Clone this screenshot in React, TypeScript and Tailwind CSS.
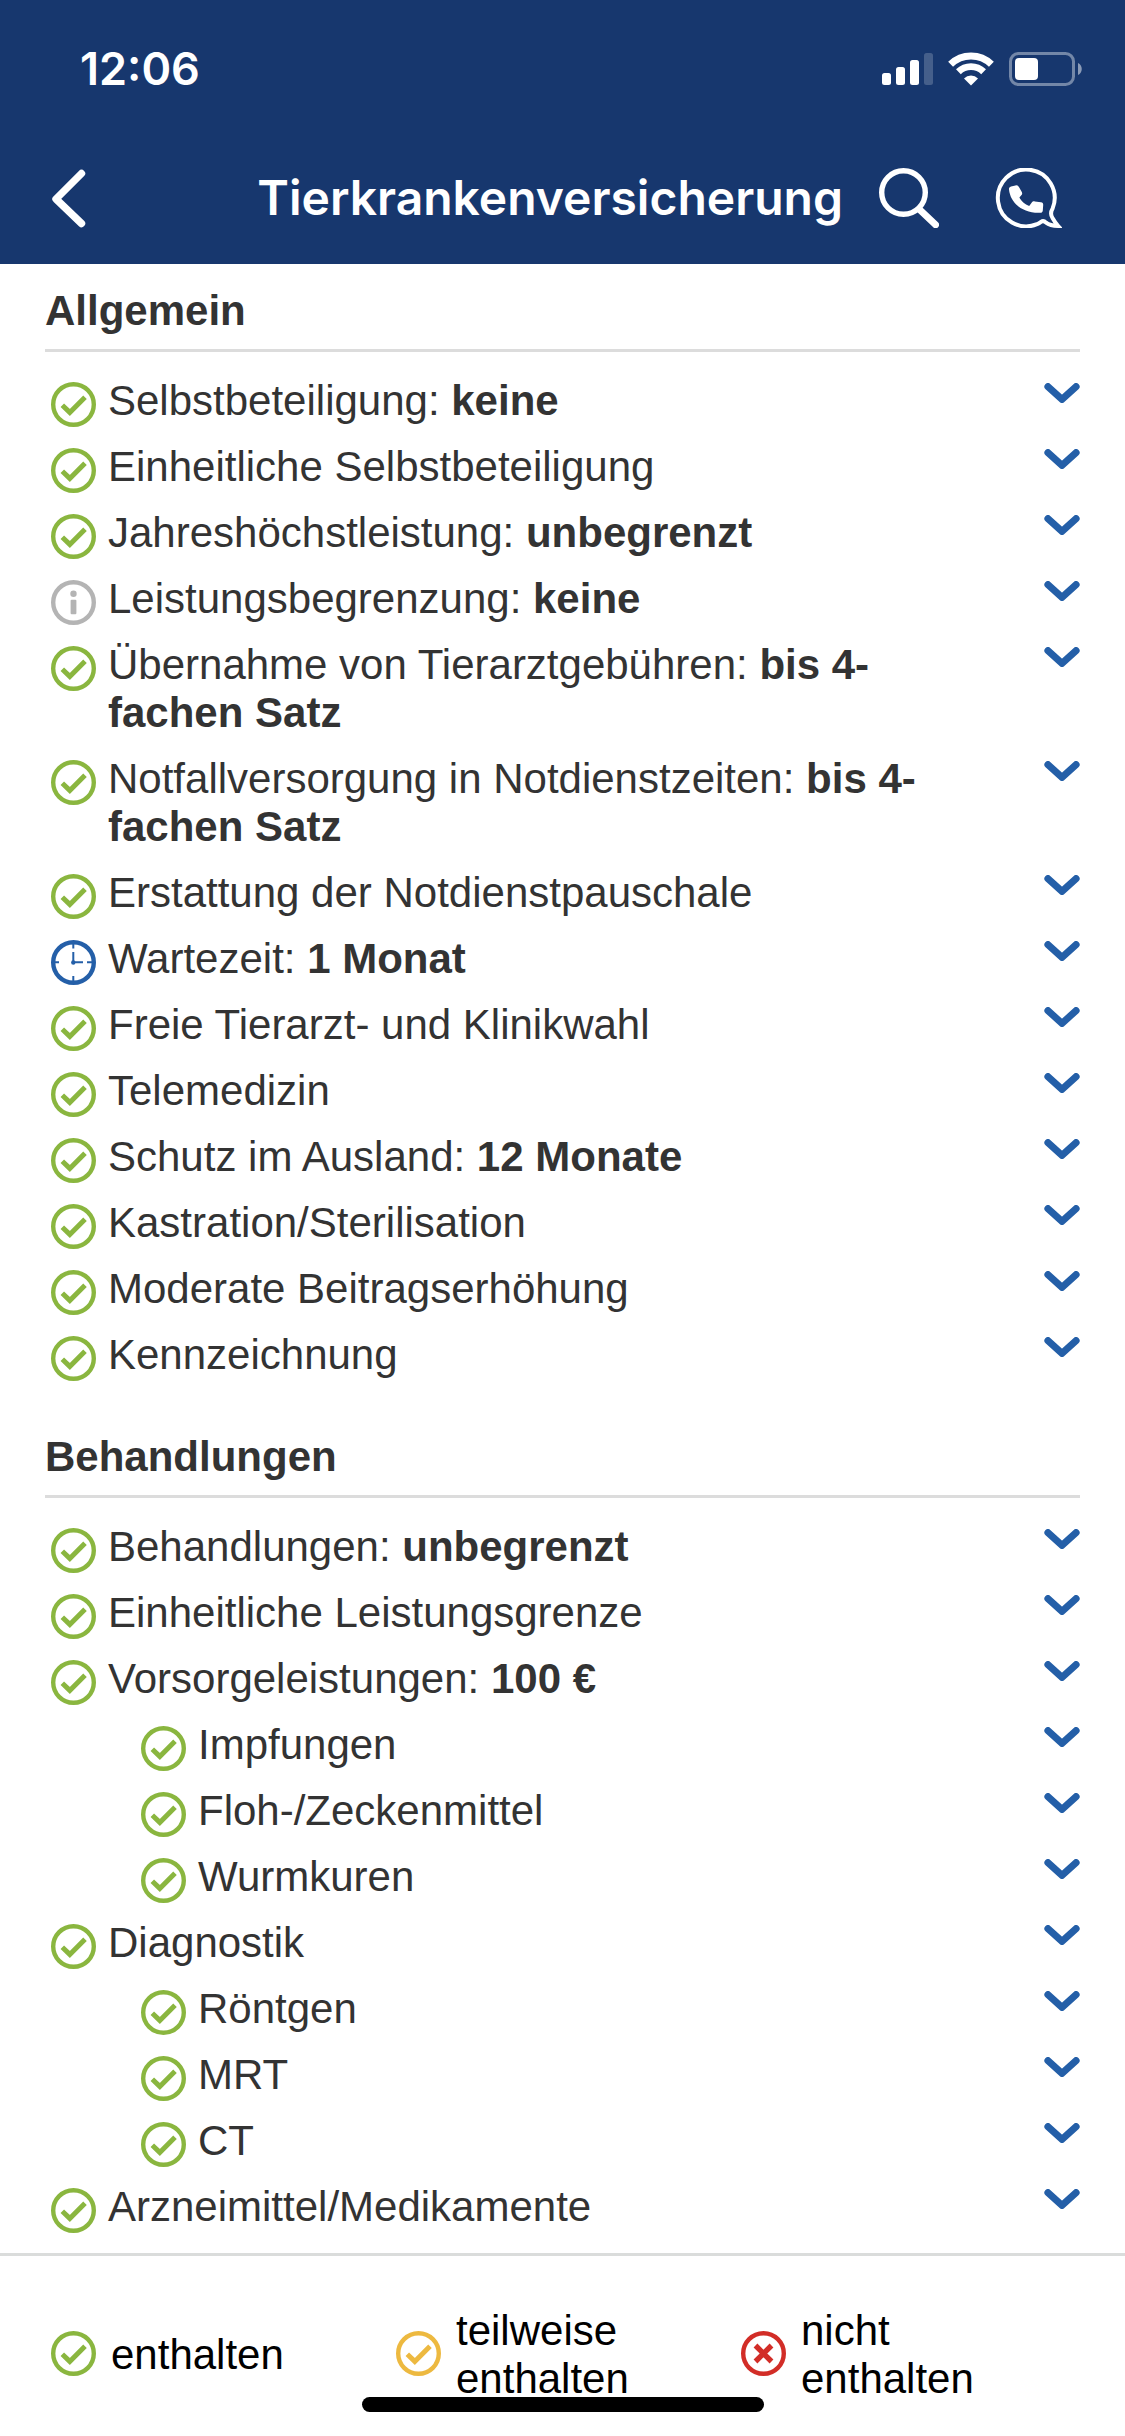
import { useState } from 'react';

type Status = 'ok' | 'partial' | 'none' | 'info' | 'clock';

interface Item {
  label: string;
  value?: string;
  status?: Status;
  nested?: boolean;
}

interface Section {
  title: string;
  items: Item[];
}

const sections: Section[] = [
  {
    title: 'Allgemein',
    items: [
      { label: 'Selbstbeteiligung', value: 'keine' },
      { label: 'Einheitliche Selbstbeteiligung' },
      { label: 'Jahreshöchstleistung', value: 'unbegrenzt' },
      { label: 'Leistungsbegrenzung', value: 'keine', status: 'info' },
      { label: 'Übernahme von Tierarztgebühren', value: 'bis 4-fachen Satz' },
      { label: 'Notfallversorgung in Notdienstzeiten', value: 'bis 4-fachen Satz' },
      { label: 'Erstattung der Notdienstpauschale' },
      { label: 'Wartezeit', value: '1 Monat', status: 'clock' },
      { label: 'Freie Tierarzt- und Klinikwahl' },
      { label: 'Telemedizin' },
      { label: 'Schutz im Ausland', value: '12 Monate' },
      { label: 'Kastration/Sterilisation' },
      { label: 'Moderate Beitragserhöhung' },
      { label: 'Kennzeichnung' },
    ],
  },
  {
    title: 'Behandlungen',
    items: [
      { label: 'Behandlungen', value: 'unbegrenzt' },
      { label: 'Einheitliche Leistungsgrenze' },
      { label: 'Vorsorgeleistungen', value: '100 €' },
      { label: 'Impfungen', nested: true },
      { label: 'Floh-/Zeckenmittel', nested: true },
      { label: 'Wurmkuren', nested: true },
      { label: 'Diagnostik' },
      { label: 'Röntgen', nested: true },
      { label: 'MRT', nested: true },
      { label: 'CT', nested: true },
      { label: 'Arzneimittel/Medikamente' },
    ],
  },
];

const legend: { label: string; status: Status }[] = [
  { label: 'enthalten', status: 'ok' },
  { label: 'teilweise enthalten', status: 'partial' },
  { label: 'nicht enthalten', status: 'none' },
];

const statusColor: Record<Status, string> = {
  ok: 'text-[#8ab63f]',
  partial: 'text-[#edb940]',
  none: 'text-[#d22d27]',
  info: 'text-[#b4b4b4]',
  clock: 'text-[#245fa8]',
};

function StatusIcon({ status }: { status: Status }) {
  return (
    <svg className={`size-[45px] shrink-0 ${statusColor[status]}`} viewBox="0 0 45 45" fill="none" stroke="currentColor" aria-hidden="true">
      <circle cx="22.5" cy="22.5" r="20.3" strokeWidth="4.4" />
      {(status === 'ok' || status === 'partial') && (
        <path d="M11.3 23.2L18.8 30.4L34 15.2" strokeWidth="5" />
      )}
      {status === 'none' && <path d="M14.5 14.5L30.5 30.5M30.5 14.5L14.5 30.5" strokeWidth="5.4" />}
      {status === 'info' && (
        <g fill="currentColor" stroke="none">
          <circle cx="22.5" cy="13.8" r="3.2" />
          <rect x="19.6" y="19.8" width="5.8" height="14.4" rx="1" />
        </g>
      )}
      {status === 'clock' && (
        <g>
          <path d="M22.3 3V8.5M22.3 36V42M3 22.3H8M36 22.3H42M22.3 12V22.3H32" strokeWidth="2" />
          <circle cx="22.3" cy="22.5" r="2.2" fill="currentColor" stroke="none" />
        </g>
      )}
    </svg>
  );
}

function StatusBar() {
  return (
    <div className="flex items-center justify-between pl-20 pr-[42px] pt-[46px]">
      <span className="text-[45px] leading-[46px] font-semibold">12:06</span>
      <div className="flex items-center gap-[15px]">
        <svg className="h-9 w-[51px]" viewBox="0 0 51 36" fill="currentColor" aria-hidden="true">
          <rect x="0" y="22" width="9" height="12" rx="2.5" />
          <rect x="14" y="16" width="9" height="18" rx="2.5" />
          <rect x="28" y="9" width="9" height="25" rx="2.5" />
          <rect x="42" y="2" width="9" height="32" rx="2.5" opacity="0.2" />
        </svg>
        <svg className="h-9 w-[46px]" viewBox="0 0 46 36" fill="none" stroke="currentColor" aria-hidden="true">
          <path d="M2.6 13.2A29.3 29.3 0 0 1 43.4 13.2" strokeWidth="7" />
          <path d="M10.4 20.8A18 18 0 0 1 35.6 20.8" strokeWidth="6.8" />
          <path d="M23 34.4L16 27.4A10 10 0 0 1 30 27.4Z" fill="currentColor" stroke="none" />
        </svg>
        <svg className="h-9 w-[74px]" viewBox="0 0 74 36" fill="none" aria-hidden="true">
          <rect x="1.5" y="2.5" width="63" height="31" rx="8" stroke="currentColor" strokeWidth="3" opacity="0.4" />
          <rect x="6" y="7" width="23" height="22" rx="4" fill="currentColor" />
          <path d="M69 12C74 14 74 22 69 24Z" fill="currentColor" opacity="0.5" />
        </svg>
      </div>
    </div>
  );
}

function NavBar() {
  return (
    <div className="flex items-center pl-[51px] pr-[63px] pt-[75px] pb-[35px]">
      <button type="button" aria-label="Zurück" className="mr-auto">
        <svg className="h-[60px] w-9" viewBox="0 0 36 60" fill="none" stroke="currentColor" strokeWidth="7.4" strokeLinecap="round" aria-hidden="true">
          <path d="M30.5 5.5L5 31L30.5 55.5" strokeLinejoin="round" />
        </svg>
      </button>
      <h1 className="text-[48px] leading-[62px] font-semibold">Tierkrankenversicherung</h1>
      <button type="button" aria-label="Suche" className="ml-9">
        <svg className="size-[60px]" viewBox="0 0 60 60" fill="none" stroke="currentColor" aria-hidden="true">
          <circle cx="24.5" cy="24.5" r="21.8" strokeWidth="5.4" />
          <path d="M40.5 41.5L56.6 56.8" strokeWidth="6.8" strokeLinecap="round" />
        </svg>
      </button>
      <button type="button" aria-label="Kontakt" className="ml-14">
        <svg className="h-[60px] w-[67px]" viewBox="0 0 67 60" fill="none" stroke="currentColor" aria-hidden="true">
          <path
            d="M42 56.2A28.4 28.4 0 1 1 57.6 40.5Q54.6 45.5 57.5 50Q60 54.5 63.2 58Q55 57.6 51 54.6Q48.5 52 46 53.8Q44 55.2 42 56.2Z"
            strokeWidth="4"
          />
          <path
            d="M14 21.5C13.8 20 14.5 19.2 16 18.6L20.5 17.4C22 17 23 17.6 23.8 18.8L26.8 24C27.5 25.4 27.2 26.2 26.3 27.3L24.4 29.6C26 33 30 36.4 34.2 38L36.6 34.8C37.5 33.6 38.4 33.2 39.8 33.4L46 34.3C47.6 34.6 48.3 35.4 48.2 37L47.8 42.5C47.6 44.2 46.8 44.8 45.2 44.8C29 45.6 15.5 36 14 21.5Z"
            fill="currentColor"
            stroke="none"
          />
        </svg>
      </button>
    </div>
  );
}

function ItemRow({ item }: { item: Item }) {
  const [open, setOpen] = useState(false);

  return (
    <li>
      <button
        type="button"
        aria-expanded={open}
        onClick={() => setOpen(!open)}
        className={`flex w-full items-start py-[9px] text-left ${item.nested ? 'pl-24' : 'pl-1.5'}`}
      >
        <span className="mr-3 h-12 shrink-0 pt-[5px]">
          <StatusIcon status={item.status ?? 'ok'} />
        </span>
        <span className="mr-24 flex-1">
          {item.label}
          {item.value && (
            <>
              : <strong className="font-bold">{item.value}</strong>
            </>
          )}
        </span>
        <svg
          className={`mt-1.5 h-5 w-9 shrink-0 text-[#245fa8] ${open ? 'rotate-180' : ''}`}
          viewBox="0 0 36 20"
          fill="none"
          stroke="currentColor"
          strokeWidth="7"
          strokeLinecap="round"
          strokeLinejoin="round"
          aria-hidden="true"
        >
          <path d="M3.9 3.6L18 16.4L32.1 3.6" />
        </svg>
      </button>
    </li>
  );
}

export default function App() {
  return (
    <div className="relative flex min-h-screen flex-col bg-white font-['Liberation_Sans',Arial,sans-serif] text-[42px] leading-[48px] text-[#333333]">
      {/* Header */}
      <header className="bg-[#17376e] font-['Inter',sans-serif] text-white">
        <StatusBar />
        <NavBar />
      </header>

      {/* Leistungen */}
      <main className="flex flex-1 flex-col gap-[45px] px-[45px] pt-[23px] pb-[13px]">
        {sections.map((section) => (
          <section key={section.title}>
            <h2 className="mb-4 border-b-3 border-[#dcdcdc] pb-3.5 font-bold">{section.title}</h2>
            <ul>
              {section.items.map((item) => (
                <ItemRow key={item.label} item={item} />
              ))}
            </ul>
          </section>
        ))}
      </main>

      {/* Legende */}
      <footer className="border-t-3 border-[#dadcdb] px-[45px] pt-[47px] pb-[33px] text-black">
        <ul className="grid grid-cols-3">
          {legend.map((entry) => (
            <li key={entry.label} className="flex items-center gap-[15px] pl-1.5 pr-3">
              <StatusIcon status={entry.status} />
              <span className="pt-1">{entry.label}</span>
            </li>
          ))}
        </ul>
      </footer>

      {/* Home indicator */}
      <div className="absolute bottom-6 left-1/2 h-[15px] w-[402px] -translate-x-1/2 rounded-full bg-black" />
    </div>
  );
}
